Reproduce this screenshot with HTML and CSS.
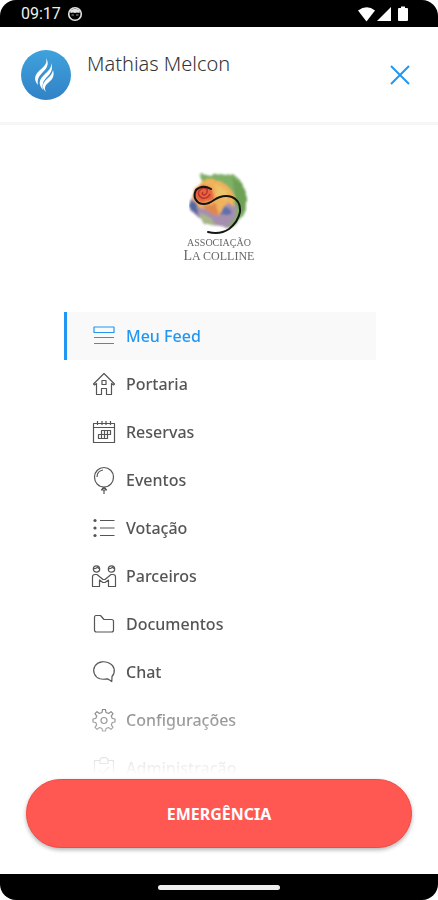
FILE: index.html
```
<!DOCTYPE html>
<html lang="pt-BR">

<head>
    <meta charset="UTF-8">
    <meta name="viewport" content="width=device-width, initial-scale=1.0">
    <title>Associação La Colline</title>
    <link rel="stylesheet" href="styles.css">
</head>

<body>
    <div class="phone">
        <!-- Status bar -->
        <div class="status-bar">
            <span class="status-time">09:17</span>
            <svg class="status-app" width="16" height="16" viewBox="0 0 16 16">
                <circle cx="8" cy="8" r="6.3" fill="none" stroke="#e4e4e4" stroke-width="1.6" />
                <path d="M3 4.5Q8 1 13 4.5L12.5 7 10 6.500 8 7 6 6.500 3.5 7Z" fill="#e4e4e4" />
                <path d="M4.5 9h2.5M9 9h2.5" stroke="#999" stroke-width="1" />
            </svg>
            <svg class="status-icons" width="52" height="18" viewBox="0 0 52 18" fill="#fff">
                <path d="M0 5.5Q9 -1 17 5.5L8.500 16.5Z" />
                <path d="M33 2v14H19Z" />
                <path d="M43 3V1.500h4V3h2q1 0 1 1v11q0 1-1 1h-8q-1 0-1-1V4q0-1 1-1Z" />
            </svg>
        </div>

        <!-- User header -->
        <header class="header">
            <svg class="avatar" width="50" height="50" viewBox="0 0 50 50">
                <defs>
                    <linearGradient id="avatarFill" x1="0" y1="0" x2="0" y2="1">
                        <stop offset="0" stop-color="#3fa2dc" />
                        <stop offset="1" stop-color="#3182c6" />
                    </linearGradient>
                </defs>
                <circle cx="25" cy="25" r="25" fill="url(#avatarFill)" />
                <g fill="#fff">
                    <path d="M25 8C27 14 22 17 18 21C13 26 13 30 17 35C16 29 18 26 22 22C27 17 28 13 25 8Z" />
                    <path d="M30 13C31 18 27 21 23 25C18 30 17 34 22 40C21 34 22 31 26 27C31 22 32 18 30 13Z" />
                    <path d="M32 20C34 26 31 30 27 33C24 36 23 38 25 42C21 38 21 35 24 31C28 27 31 25 32 20Z" />
                </g>
            </svg>
            <h1 class="user-name">Mathias Melcon</h1>
            <button class="close-btn" type="button" aria-label="Fechar">
                <svg width="20" height="20" viewBox="0 0 20 20" fill="none" stroke="#2196f3" stroke-width="2">
                    <path d="M1 1l18 18M19 1L1 19" />
                </svg>
            </button>
        </header>

        <main class="content">
            <div class="brand">
                <svg width="60" height="66" viewBox="0 0 60 66">
                    <defs>
                        <filter id="paint" x="-10%" y="-10%" width="120%" height="120%">
                            <feTurbulence type="fractalNoise" baseFrequency="0.15" numOctaves="2" seed="4" />
                            <feDisplacementMap in="SourceGraphic" scale="4" />
                            <feGaussianBlur stdDeviation="0.9" />
                        </filter>
                    </defs>
                    <g filter="url(#paint)">
                        <path d="M11 7L13 4 22 6 26 3 37 5 43 3 52 11 57 24 57 40 52 50 42 58 24 52 18 20Z" fill="#7fb067" />
                        <path d="M43 8L53 14 57 30 54 43 48 36 46 24Z" fill="#6ea055" />
                        <path d="M1 30L10 27 24 38 40 31 48 36 46 48 37 57 20 54 8 46 1 40Z" fill="#a68fae" />
                        <path d="M1 31L8 33 9 45 1 39Z" fill="#5269a0" />
                        <path d="M30 40L36 36 42 40 40 45 32 45Z" fill="#5e6fab" />
                        <path d="M10 43L22 48 27 56 14 53Z" fill="#a9b68b" />
                        <path d="M6 17Q12 8 27 10Q41 14 46 27L44 36 38 32 30 45 22 40 11 38 4 29Z" fill="#f0b35c" />
                        <path d="M13 36L28 34 29 46 20 42Z" fill="#df874d" />
                        <path d="M27 15L38 21 37 29 28 28Z" fill="#edc46a" />
                        <ellipse cx="15" cy="24" rx="10" ry="9" fill="#e8643f" />
                    </g>
                    <path d="M21 24Q19 29 13 28Q8 25 10 21Q13 17 18 19Q19 24 15 25Q12 24 14 22" fill="none" stroke="#b8352b" stroke-width="1.500" />
                    <path d="M22 19Q13 14 7 20Q3 28 10 33Q17 36 25 30Q34 24 43 27Q52 31 51 42Q49 52 40 59Q31 65 19 62" fill="none" stroke="#151515" stroke-width="2" stroke-linecap="round" />
                </svg>
                <span class="brand-top">Associação</span>
                <span class="brand-name">La Colline</span>
            </div>

            <nav class="menu">
                <a class="menu-item active" href="#feed">
                    <svg class="icon" viewBox="0 0 24 24">
                        <path d="M2 3h20v5.500H2zM2 13.500h20M2 19.500h20" />
                    </svg>
                    Meu Feed
                </a>
                <a class="menu-item" href="#portaria">
                    <svg class="icon" viewBox="0 0 24 24">
                        <path d="M1.500 12L12 1.500 22.500 12l-1 1-2-1.500v11h-5v-6h-5v6h-5v-11l-2 1.500zM10 8.500h4v4h-4z" />
                    </svg>
                    Portaria
                </a>
                <a class="menu-item" href="#reservas">
                    <svg class="icon" viewBox="0 0 24 24">
                        <path d="M1.500 3.500h21v19h-21zM1.500 7.500h21M5.500 1v4M10 1v4M14 1v4M18.500 1v4" />
                        <path d="M9.500 10.500h9v4h-3v4h-9v-4h3zM9.500 14.500h6M9.500 14.500v4M12.500 10.500v8M15.500 10.500v4" />
                    </svg>
                    Reservas
                </a>
                <a class="menu-item" href="#eventos">
                    <svg class="icon icon-tall" viewBox="0 0 24 28">
                        <path d="M12 21C6 21 2.500 16 2.500 11A9.500 9.500 0 0 1 21.500 11C21.500 16 18 21 12 21ZM5 11Q5 5 11 4M12 21l-2.500 3h5zM12 24v4" />
                    </svg>
                    Eventos
                </a>
                <a class="menu-item" href="#votacao">
                    <svg class="icon" viewBox="0 0 24 24">
                        <path d="M8 4.500h14.500M8 12h14.500M8 19.500h14.500" />
                        <g fill="currentColor" stroke="none">
                            <circle cx="3" cy="4.500" r="1.600" />
                            <circle cx="3" cy="12" r="1.600" />
                            <circle cx="3" cy="19.500" r="1.600" />
                        </g>
                    </svg>
                    Votação
                </a>
                <a class="menu-item" href="#parceiros">
                    <svg class="icon icon-wide" viewBox="0 0 26 24">
                        <circle cx="5.500" cy="5" r="3.200" />
                        <circle cx="20.500" cy="5" r="3.200" />
                        <path d="M2.500 4.500Q5 5 6.500 3Q7 4.500 8.500 4.500M17.500 4.500Q20 5 21.500 3Q22 4.500 23.500 4.500" />
                        <path d="M8.500 16V22.500H1.500V13Q1.500 10.500 4 10.500H6L12 15.500H14L20 10.500H22Q24.500 10.500 24.500 13V22.500H17.500V16L14 18.500H12Z" />
                    </svg>
                    Parceiros
                </a>
                <a class="menu-item" href="#documentos">
                    <svg class="icon" viewBox="0 0 24 24">
                        <path d="M4 3.500h4.500l3.500 4h7.500q2 0 2 2v8.500q0 2-2 2h-15q-2 0-2-2V5.500q0-2 1.500-2z" />
                    </svg>
                    Documentos
                </a>
                <a class="menu-item" href="#chat">
                    <svg class="icon" viewBox="0 0 24 24">
                        <path d="M20 16.500C24 12 22.500 6 18 3.500C13 .500 6 1.500 3 6C0 11 2.500 17 8 18.800C11 19.700 13 19.300 15.500 18.800L19.800 21.500Z" />
                    </svg>
                    Chat
                </a>
                <a class="menu-item" href="#configuracoes">
                    <svg class="icon" viewBox="0 0 24 24">
                        <path d="M10.500 1.500h3l.5 3 2.500 1 2.500-1.800 2 2L19.300 8.200l1 2.300 2.700.5v3l-2.700.5-1 2.300 1.700 2.500-2 2-2.500-1.800-2.500 1-.5 2.500h-3l-.5-2.500-2.500-1L5 21.300l-2-2 1.700-2.500-1-2.300L1 14v-3l2.700-.5 1-2.300L3 5.700l2-2 2.500 1.800 2.500-1z" />
                        <circle cx="12" cy="12.500" r="3" />
                    </svg>
                    Configurações
                </a>
                <a class="menu-item" href="#administracao">
                    <svg class="icon" viewBox="0 0 24 24">
                        <path d="M2.500 4.500h5.500q0-3 4-3t4 3h5.500v18h-19zM8 4.500v3h8v-3M7 14l3.500 3.500L17 11" />
                    </svg>
                    Administração
                </a>
            </nav>
        </main>

        <div class="actions">
            <button class="emergency-btn" type="button">EMERGÊNCIA</button>
        </div>

        <!-- Gesture bar -->
        <div class="nav-bar">
            <span class="nav-handle"></span>
        </div>
    </div>
</body>

</html>
```
FILE: styles.css
```
* {
    box-sizing: border-box;
}

body {
    margin: 0;
    background: #fff;
    font-family: "Noto Sans", "Open Sans", sans-serif;
    color: #555;
}

.phone {
    display: flex;
    flex-direction: column;
    height: 100vh;
}

.status-bar {
    display: flex;
    align-items: center;
    gap: 6px;
    height: 27px;
    padding: 0 28px 0 21px;
    background: #000;
    border-radius: 16px 16px 0 0;
    flex-shrink: 0;
}

.status-time {
    color: #eee;
    font-family: Roboto, sans-serif;
    font-size: 16px;
    line-height: 27px;
}

.status-icons {
    margin-left: auto;
}

.header {
    display: flex;
    align-items: center;
    gap: 16px;
    height: 98px;
    padding: 0 28px 0 21px;
    border-bottom: 3px solid #f6f6f6;
    flex-shrink: 0;
}

.user-name {
    align-self: flex-start;
    flex: 1;
    margin: 23px 0 0;
    color: #333;
    font-size: 20px;
    font-weight: 300;
    line-height: 28px;
}

.close-btn {
    display: flex;
    padding: 0;
    border: 0;
    background: none;
    cursor: pointer;
}

/* the list fades out above the emergency button */
.content {
    flex: 1;
    min-height: 0;
    padding: 45px 62px 0 64px;
    overflow-y: auto;
    scrollbar-width: none;
    -webkit-mask-image: linear-gradient(to top, transparent 4px, #000 96px);
    mask-image: linear-gradient(to top, transparent 4px, #000 96px);
}

.brand {
    display: flex;
    flex-direction: column;
    align-items: center;
    height: 142px;
    padding-right: 2px;
    color: #666;
    font-family: "Liberation Serif", serif;
    text-transform: uppercase;
}

.brand-top {
    font-size: 10px;
    line-height: 14px;
}

.brand-name {
    font-size: 12px;
    line-height: 12px;
}

.brand-name::first-letter {
    font-size: 14px;
}

.menu {
    display: flex;
    flex-direction: column;
}

.menu-item {
    display: flex;
    align-items: center;
    gap: 10px;
    height: 48px;
    padding-left: 25px;
    border-left: 3px solid transparent;
    color: #555;
    font-size: 16px;
    font-weight: 500;
    text-decoration: none;
    flex-shrink: 0;
}

.menu-item.active {
    border-left-color: #2196f3;
    background: #f9f9f9;
    color: #2196f3;
}

.icon {
    width: 24px;
    height: 24px;
    fill: none;
    stroke: currentColor;
    stroke-width: 1.2px;
    stroke-linejoin: round;
}

.icon-tall {
    height: 28px;
}

.icon-wide {
    width: 26px;
    margin: 0 -1px;
}

.actions {
    padding: 0 26px 26px;
    flex-shrink: 0;
}

.emergency-btn {
    display: block;
    width: 100%;
    height: 69px;
    border: 1px solid #f4483f;
    border-radius: 35px;
    background: #ff5852;
    box-shadow: 0 2px 4px rgba(0, 0, 0, 0.3);
    color: #fff;
    font-family: inherit;
    font-size: 16px;
    font-weight: 700;
    cursor: pointer;
}

.nav-bar {
    display: flex;
    justify-content: center;
    align-items: center;
    height: 26px;
    background: #000;
    border-radius: 0 0 16px 16px;
    flex-shrink: 0;
}

.nav-handle {
    width: 28%;
    height: 5px;
    border-radius: 3px;
    background: #eee;
}
```
